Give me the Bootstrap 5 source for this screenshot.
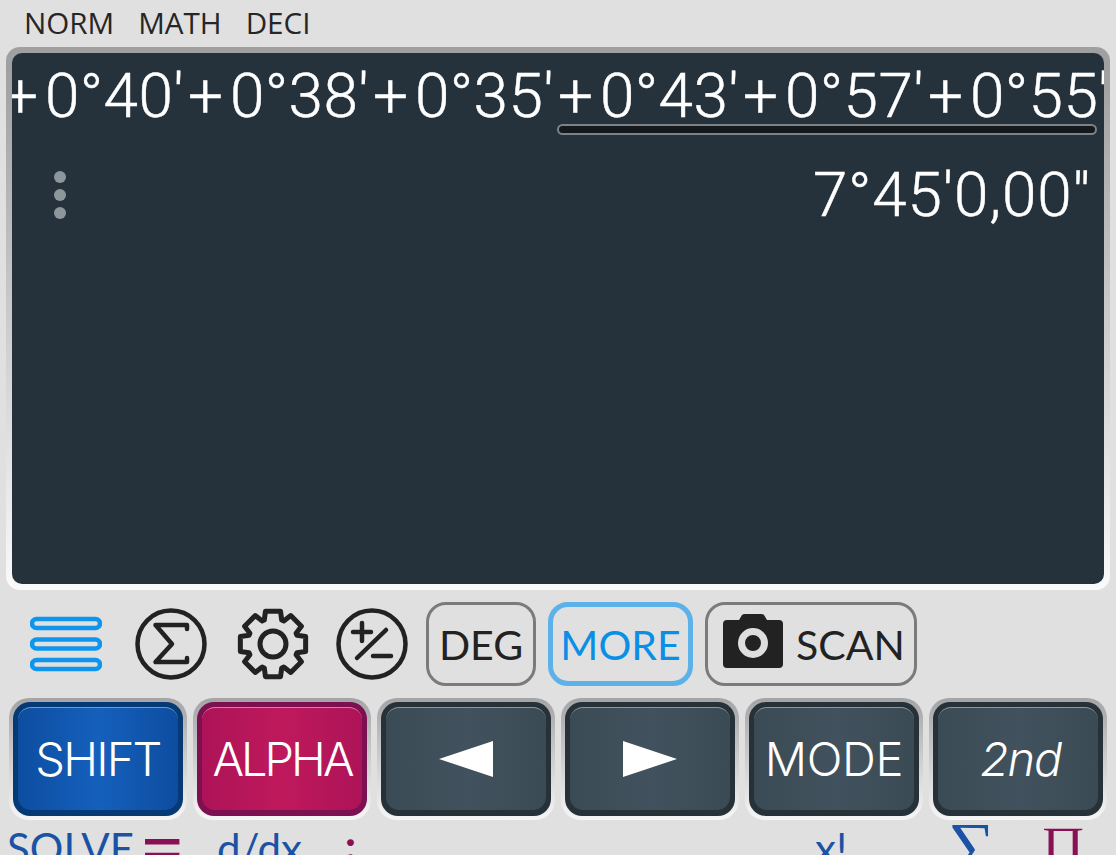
<!doctype html>
<html lang="en">
<head>
<meta charset="utf-8">
<title>Calculator</title>
<link href="https://cdn.jsdelivr.net/npm/bootstrap@5.3.0/dist/css/bootstrap.min.css" rel="stylesheet">
<style>
html,body{height:855px;overflow:hidden;background:#e0e0e0}
.calc-app{height:855px;overflow:hidden;padding:0 6px;color:#222;font-family:"Lato","Open Sans",sans-serif}
.status-bar{height:47px;padding:7px 0 0 18px;font-family:"Open Sans",sans-serif;font-size:29.6px;line-height:32px;color:#262626}
.status-bar span{margin-right:24px}
.screen-frame{height:543px;padding:6px;border-radius:14px;background:linear-gradient(#a09fa2 0,#a09fa2 4%,#fafafa 100%)}
.screen-in{height:531px;background:#25313b;border-radius:10px;color:#fff;font-family:"Roboto",sans-serif;font-weight:300;overflow:hidden;-webkit-text-stroke:.5px #fff}
.expr-line{font-size:62px;line-height:70px;height:69px;white-space:nowrap;padding-top:8px;margin-left:-9px;letter-spacing:.4px}
.expr-part{display:inline-block;width:185px;text-align:left}
.expr-plus{display:inline-block;width:42px}
.scroll-track{height:11px;width:540px;margin:2px 0 0 545px;background:#14191e;border:2px solid #7c8286;border-radius:6px}
.result-row{padding:25px 13px 0 42px}
.dots-col{gap:6px;padding-top:11px}
.dots-col i{display:block;width:12px;height:12px;border-radius:50%;background:#8d969b}
.result-text{font-size:62px;line-height:70px;letter-spacing:.8px}
.tool-row{height:108px;padding:12px 0 0 24px}
.tool-icon{width:72px;height:72px;display:block;flex:none;margin-top:6px}
.gap-a{margin-left:33px}.gap-b{margin-left:30px}.gap-c{margin-left:27px}.gap-d{margin-left:18px}.gap-e{margin-left:12px}
.tool-btn{height:84px;border:3px solid #7b7b7b;border-radius:20px;font-size:41px;color:#222;line-height:1;flex:none}
.tool-deg{width:110px}
.tool-more{width:145px;border:5px solid #5bb1e8;color:#0b8fe6}
.tool-scan{width:212px;gap:13px;padding-left:15px}
.cam-icon{margin-bottom:6px}
.key-row{gap:6px;padding:0 3px}
.key-shell{flex:1 1 0;height:122px;padding:4px;border-radius:20px;background:linear-gradient(#a4a4a6,#f6f6f6)}
.key-body{height:114px;border-radius:17px;padding:5px 5px 6px;background:#263238}
.key-face{height:100%;border-radius:13px;color:#fff;font-family:"Inter",sans-serif;font-weight:300;font-size:47px;border-top:1px solid #8a989f;background:linear-gradient(90deg,#3b4b55,#41525e 50%,#3b4b55)}
.key-shift{letter-spacing:-1.8px}
.key-alpha{letter-spacing:-3px}
.key-mode{letter-spacing:-.3px}
.key-second{letter-spacing:-1.3px;padding-left:5px}
.key-blue .key-body{background:#053a74}
.key-blue .key-face{background:linear-gradient(90deg,#0d4da0,#1560bc 50%,#0d4da0);border-top-color:#6f9ad4}
.key-red .key-body{background:#7d1050}
.key-red .key-face{background:linear-gradient(90deg,#ad1358,#bf195c 50%,#ad1358);border-top-color:#d97fa5}
.key-tri{width:54px;height:36px;display:block}
.label-row{gap:6px;padding:0 3px;margin-top:3px;height:40px;font-size:42px;line-height:50px;font-family:"Lato",sans-serif}
.label-cell{flex:1 1 0;white-space:nowrap}
.lbl-blue{color:#1a52a5}
.lbl-red{color:#8a1055}
.lbl-eq{font-size:80px;line-height:50px;margin:-3px 0 0 5px}
.lbl-colon{font-weight:900;margin:-3px 0 0 43px}
.lbl-sum{font-family:"Liberation Serif",serif;font-size:66px;line-height:46px;margin-left:19px}
.lbl-prod{font-family:"Liberation Serif",serif;font-size:54px;line-height:46px;margin:0 0 0 46px}
.pos-solve{margin-left:-2px}
.pos-ddx{margin-left:24px}
.pos-fact{margin-left:70px}
</style>
</head>
<body>
<div class="calc-app">
  <div class="status-bar d-flex"><span>NORM</span><span>MATH</span><span>DECI</span></div>
  <div class="screen-frame">
    <div class="screen-in">
      <div class="expr-line"><span class="expr-part"><span class="expr-plus">+</span>0°40'</span><span class="expr-part"><span class="expr-plus">+</span>0°38'</span><span class="expr-part"><span class="expr-plus">+</span>0°35'</span><span class="expr-part"><span class="expr-plus">+</span>0°43'</span><span class="expr-part"><span class="expr-plus">+</span>0°57'</span><span class="expr-part"><span class="expr-plus">+</span>0°55'</span></div>
      <div class="scroll-track"></div>
      <div class="result-row d-flex justify-content-between">
        <div class="dots-col d-flex flex-column"><i></i><i></i><i></i></div>
        <div class="result-text">7°45'0,00"</div>
      </div>
    </div>
  </div>
  <div class="tool-row d-flex align-items-start">
    <svg class="tool-icon" viewBox="0 0 72 72" fill="none" stroke="#0f96ec" stroke-width="4.500"><rect x="2" y="11" width="68" height="9" rx="4.500"/><rect x="2" y="31.500" width="68" height="9" rx="4.500"/><rect x="2" y="52" width="68" height="9" rx="4.500"/></svg>
    <svg class="tool-icon gap-a" viewBox="0 0 72 72" fill="none" stroke="#222" stroke-width="4.500"><circle cx="36" cy="36" r="33.500"/><path d="M52 21V17H20.500L37 36 20.500 54H52V50" stroke-linejoin="round" stroke-linecap="round"/></svg>
    <svg class="tool-icon gap-b" viewBox="0 0 72 72" fill="none" stroke="#222" stroke-width="5" stroke-linejoin="round"><circle cx="36" cy="36" r="13"/><path d="M27.280 12.040 28.460 3.360H43.540L44.720 12.040 46.780 12.890 53.750 7.590 64.410 18.250 59.110 25.220 59.960 27.280 68.640 28.460V43.540L59.960 44.720 59.110 46.780 64.410 53.750 53.750 64.410 46.780 59.110 44.720 59.960 43.540 68.640H28.460L27.280 59.960 25.220 59.110 18.250 64.410 7.590 53.750 12.890 46.780 12.040 44.720 3.360 43.540V28.460L12.040 27.280 12.890 25.220 7.590 18.250 18.250 7.590 25.220 12.890Z"/></svg>
    <svg class="tool-icon gap-c" viewBox="0 0 72 72" fill="none" stroke="#222" stroke-width="4.500" stroke-linecap="round"><circle cx="36" cy="36" r="33.500"/><path d="M17 24h18M26 15v18M50 22 21 50M37 48h18"/></svg>
    <div class="tool-btn tool-deg gap-d d-flex align-items-center justify-content-center">DEG</div>
    <div class="tool-btn tool-more gap-e d-flex align-items-center justify-content-center">MORE</div>
    <div class="tool-btn tool-scan gap-e d-flex align-items-center"><svg class="cam-icon" width="60" height="54" viewBox="0 0 60 54"><path fill="#222" d="M4 6h12l3-5q1-1 3-1h16q2 0 3 1l3 5h12q4 0 4 4v40q0 4-4 4H4q-4 0-4-4V10q0-4 4-4z"/><circle cx="30" cy="29" r="11.500" fill="none" stroke="#dedede" stroke-width="7"/></svg><span>SCAN</span></div>
  </div>
  <div class="key-row d-flex">
    <div class="key-shell key-blue"><div class="key-body"><div class="key-face key-shift d-flex align-items-center justify-content-center">SHIFT</div></div></div>
    <div class="key-shell key-red"><div class="key-body"><div class="key-face key-alpha d-flex align-items-center justify-content-center">ALPHA</div></div></div>
    <div class="key-shell"><div class="key-body"><div class="key-face d-flex align-items-center justify-content-center"><svg class="key-tri" viewBox="0 0 54 36"><path fill="#fff" d="M0 18 54 0v36z"/></svg></div></div></div>
    <div class="key-shell"><div class="key-body"><div class="key-face d-flex align-items-center justify-content-center"><svg class="key-tri" viewBox="0 0 54 36"><path fill="#fff" d="M54 18 0 0v36z"/></svg></div></div></div>
    <div class="key-shell"><div class="key-body"><div class="key-face key-mode d-flex align-items-center justify-content-center">MODE</div></div></div>
    <div class="key-shell"><div class="key-body"><div class="key-face key-second d-flex align-items-center justify-content-center fst-italic">2nd</div></div></div>
  </div>
  <div class="label-row d-flex">
    <div class="label-cell d-flex"><span class="lbl-blue pos-solve">SOLVE</span><span class="lbl-red lbl-eq">=</span></div>
    <div class="label-cell d-flex"><span class="lbl-blue pos-ddx">d/dx</span><span class="lbl-red lbl-colon">:</span></div>
    <div class="label-cell"></div>
    <div class="label-cell"></div>
    <div class="label-cell d-flex"><span class="lbl-blue pos-fact">x!</span></div>
    <div class="label-cell d-flex"><span class="lbl-blue lbl-sum">∑</span><span class="lbl-red lbl-prod">∏</span></div>
  </div>
</div>
<script src="https://cdn.jsdelivr.net/npm/bootstrap@5.3.0/dist/js/bootstrap.bundle.min.js"></script>
</body>
</html>
